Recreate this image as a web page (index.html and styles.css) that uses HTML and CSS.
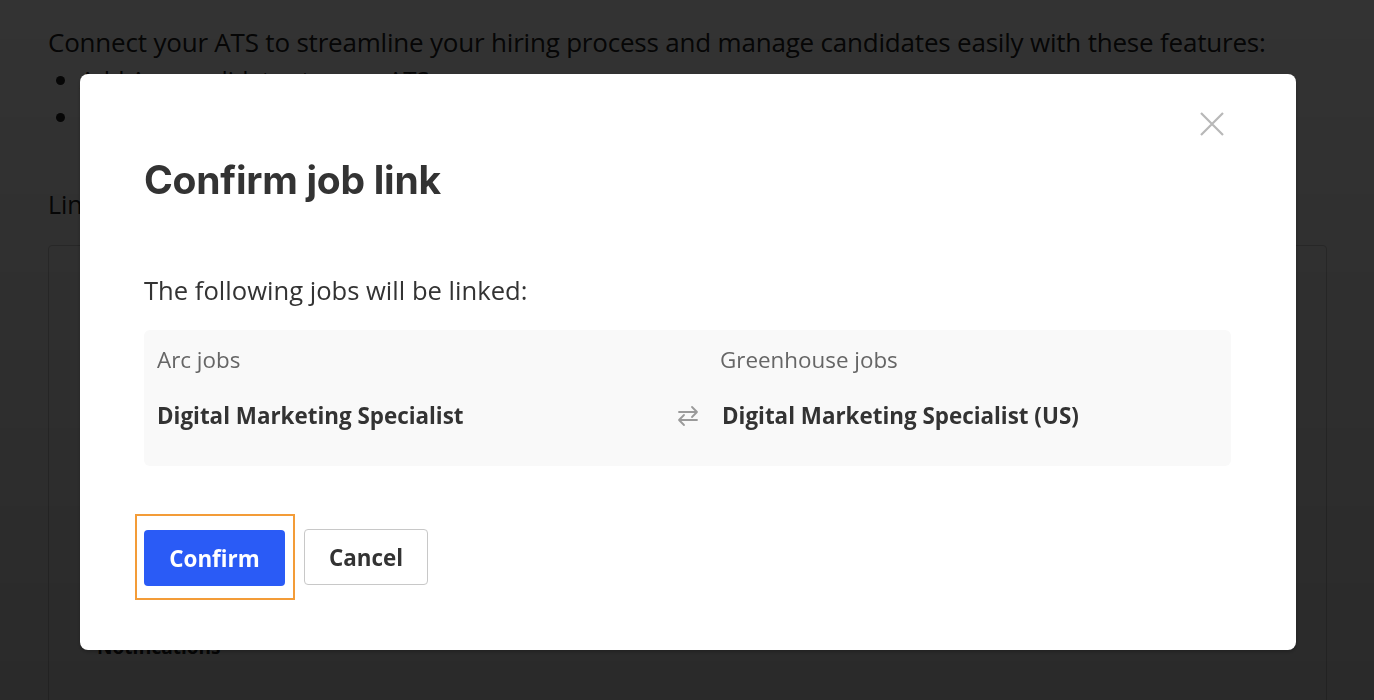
FILE: index.html
```html
<!DOCTYPE html>
<html>
<head>
<meta charset="utf-8">
<link rel="stylesheet" href="styles.css">
</head>
<body>
<main class="page">
  <p class="intro">Connect your ATS to streamline your hiring process and manage candidates easily with these features:</p>
  <ul class="features">
    <li>Add Arc candidates to your ATS</li>
    <li>Sync candidate stages automatically</li>
  </ul>
  <h2 class="section-title">Link jobs</h2>
  <section class="card">
    <div class="card-body"></div>
    <h3 class="card-sub">Notifications</h3>
  </section>
</main>

<div class="overlay">
  <div class="modal" role="dialog" aria-labelledby="modal-title">
    <button class="close" aria-label="Close">
      <svg width="26" height="26" viewBox="0 0 26 26"><path d="M2 2 L24 24 M24 2 L2 24" stroke="#b8b8b8" stroke-width="2.2" fill="none"/></svg>
    </button>
    <h1 id="modal-title" class="modal-title">Confirm job link</h1>
    <p class="lead">The following jobs will be linked:</p>
    <div class="jobs">
      <div class="col">
        <div class="col-label">Arc jobs</div>
        <div class="col-value">Digital Marketing Specialist</div>
      </div>
      <div class="swap">
        <svg width="22" height="24" viewBox="0 0 22 24"><path d="M2 8 H20 M15 3 L20 8 M20 16 H2 M7 11 L2 16 M7 21 L2 16 M15 13 L20 8" stroke="#9a9a9a" stroke-width="1.8" fill="none" stroke-linecap="round" stroke-linejoin="round"/></svg>
      </div>
      <div class="col">
        <div class="col-label">Greenhouse jobs</div>
        <div class="col-value col-value-right">Digital Marketing Specialist (US)</div>
      </div>
    </div>
    <div class="actions">
      <div class="focus-ring"><button class="btn btn-primary">Confirm</button></div>
      <button class="btn btn-secondary">Cancel</button>
    </div>
  </div>
</div>
</body>
</html>
```

FILE: styles.css
```css
html, body {
  margin: 0;
  padding: 0;
  height: 100%;
  background: #ffffff;
}
body {
  font-family: "Open Sans", "Liberation Sans", sans-serif;
  color: #202020;
  overflow: hidden;
}
.page {
  padding: 23px 47px 0 48px;
}
.intro {
  margin: 0;
  font-size: 26px;
  line-height: 38px;
  letter-spacing: -0.2px;
}
.features {
  margin: 0;
  padding-left: 32px;
  font-size: 24px;
  line-height: 37px;
}
.section-title {
  margin: 52px 0 24px;
  font-size: 25px;
  font-weight: 400;
  line-height: 34px;
}
.card {
  border: 1px solid #ccc;
  border-radius: 4px;
  height: 600px;
  padding: 0 48px;
}
.card-body {
  height: 386px;
}
.card-sub {
  font-size: 19px;
  font-weight: 700;
  line-height: 30px;
  margin: 0;
}

.overlay {
  position: fixed;
  inset: 0;
  background: linear-gradient(180deg, rgba(0,0,0,0.80) 0%, rgba(0,0,0,0.835) 100%);
}
.modal {
  position: absolute;
  left: 80px;
  top: 74px;
  width: 1216px;
  height: 576px;
  box-sizing: border-box;
  background: #fff;
  border-radius: 8px;
  padding: 74px 64px 0 64px;
  box-shadow: 0 2px 4px rgba(0,0,0,0.25);
}
.close {
  position: absolute;
  right: 71px;
  top: 37px;
  background: none;
  border: 0;
  padding: 0;
  width: 26px;
  height: 26px;
  cursor: pointer;
}
.close svg { display: block; }
.modal-title {
  margin: 0;
  font-family: Inter, "Liberation Sans", sans-serif;
  font-size: 39px;
  font-weight: 700;
  line-height: 64px;
  color: #333;
  letter-spacing: -0.25px;
}
.lead {
  margin: 61px 0 0 0;
  font-size: 25.6px;
  line-height: 36px;
  color: #333;
}
.jobs {
  margin-top: 21px;
  background: #f9f9f9;
  border-radius: 6px;
  height: 136px;
  box-sizing: border-box;
  padding: 15px 13px 0 13px;
  display: grid;
  grid-template-columns: 507px 56px 1fr;
  margin-right: 1px;
}
.col-label {
  font-size: 22.4px;
  line-height: 30px;
  color: #666;
}
.col-value {
  margin-top: 26px;
  font-size: 22.4px;
  line-height: 30px;
  font-weight: 700;
  color: #333;
}
.col-value-right {
  padding-left: 2px;
}
.swap {
  padding-top: 59px;
  padding-right: 8px;
  display: flex;
  justify-content: center;
}
.swap svg { display: block; }
.actions {
  margin-top: 48px;
  display: flex;
  align-items: center;
  gap: 9px;
}
.focus-ring {
  margin-left: -9px;
  border: 2px solid #f39c38;
  padding: 14px 8px 12px 7px;
}
.btn {
  font-family: "Open Sans", "Liberation Sans", sans-serif;
  font-size: 22.4px;
  font-weight: 700;
  height: 56px;
  border-radius: 4px;
  cursor: pointer;
  box-sizing: border-box;
  display: block;
  padding: 0;
}
.btn-primary {
  width: 141px;
  background: #2a5bf6;
  color: #fff;
  border: 0;
}
.btn-secondary {
  width: 124px;
  background: #fff;
  color: #333;
  border: 1px solid #c8c8c8;
}
```
